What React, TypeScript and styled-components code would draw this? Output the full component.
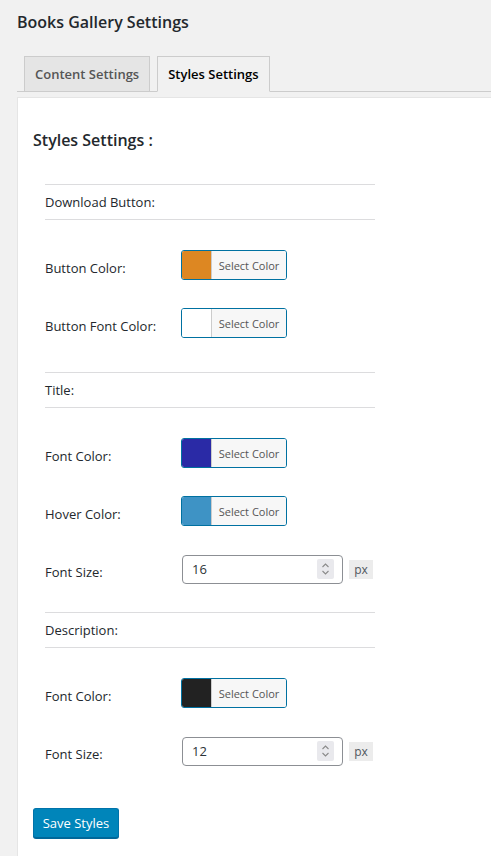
import React from "react";
import styled, { createGlobalStyle } from "styled-components";

const Global = createGlobalStyle`
  html, body { margin: 0; padding: 0; background: #f1f1f1; }
  body { font-family: "Open Sans", "Noto Sans", sans-serif; color: #23282d; }
  * { box-sizing: border-box; }
`;

const Wrap = styled.div`
  padding: 0 0 0 17px;
  min-height: 856px;
  display: flex;
  flex-direction: column;
`;

const PageTitle = styled.h1`
  margin: 0;
  padding: 10px 0 0;
  font-size: 16px;
  font-weight: 600;
  line-height: 24px;
  color: #23282d;
`;

const TabBar = styled.div`
  display: flex;
  align-items: flex-end;
  gap: 7px;
  margin-top: 22px;
  padding-left: 7px;
  border-bottom: 1px solid #ccc;
  height: 36px;
`;

const Tab = styled.div<{ $active?: boolean }>`
  padding: 5px 10px;
  line-height: 24px;
  font-size: 13px;
  font-weight: 600;
  border: 1px solid #ccc;
  border-bottom: 1px solid ${(p) => (p.$active ? "#f1f1f1" : "#ccc")};
  margin-bottom: -1px;
  background: ${(p) => (p.$active ? "#f1f1f1" : "#e5e5e5")};
  color: ${(p) => (p.$active ? "#000" : "#555")};
  height: 36px;
`;

const Panel = styled.div`
  flex: 1;
  margin-top: 5px;
  background: #fff;
  border-top: 1px solid #e5e5e5;
  border-left: 1px solid #e5e5e5;
  padding: 30px 0 40px 15px;
  display: flex;
  flex-direction: column;
  align-items: flex-start;
`;

const Heading = styled.h2`
  margin: 0;
  font-size: 16px;
  font-weight: 600;
  line-height: 24px;
  color: #23282d;
`;

const Table = styled.div`
  margin: 32px 0 0 12px;
  width: 330px;
  display: flex;
  flex-direction: column;
`;

const Section = styled.div<{ $offset?: number }>`
  margin-top: ${(p) => p.$offset ?? 0}px;
  margin-bottom: 30px;
  height: 36px;
  border-top: 1px solid #dcdcde;
  border-bottom: 1px solid #dcdcde;
  display: flex;
  align-items: center;
  font-size: 13px;
  color: #23282d;
`;

const Row = styled.div`
  display: grid;
  grid-template-columns: 136px auto;
  height: 30px;
  margin-bottom: 28px;
`;

const Label = styled.div`
  padding-top: 8px;
  line-height: 20px;
  font-size: 13px;
  color: #23282d;
`;

const Picker = styled.div`
  display: flex;
  width: 106px;
  height: 30px;
  border: 1px solid #0071a1;
  border-radius: 3px;
  overflow: hidden;
`;

const Swatch = styled.div<{ $color: string }>`
  width: 30px;
  background: ${(p) => p.$color};
  border-right: 1px solid #ccc;
`;

const PickerText = styled.div`
  flex: 1;
  background: #f7f7f7;
  color: #555;
  font-size: 11px;
  display: flex;
  align-items: center;
  justify-content: center;
`;

const NumberRowBox = styled.div`
  display: flex;
  align-items: center;
  gap: 6px;
`;

const NumberBox = styled.div`
  margin-left: 1px;
  width: 161px;
  height: 29px;
  border: 1px solid #8c8f94;
  border-radius: 4px;
  display: flex;
  align-items: center;
  padding: 0 8px 0 9px;
  background: #fff;
`;

const NumberInput = styled.input`
  flex: 1;
  min-width: 0;
  border: none;
  outline: none;
  padding: 0;
  font-family: inherit;
  font-size: 13px;
  color: #2c3338;
  background: transparent;
`;

const Spinner = styled.div`
  width: 17px;
  height: 20px;
  background: #e9e9ed;
  border-radius: 2px;
  display: flex;
  align-items: center;
  justify-content: center;
`;

const Unit = styled.span`
  display: inline-flex;
  align-items: center;
  justify-content: center;
  width: 24px;
  height: 19px;
  background: #ececec;
  color: #50575e;
  font-size: 12px;
`;

const SaveButton = styled.button`
  margin-top: 14px;
  width: 86px;
  height: 30px;
  background: #0085ba;
  border: 1px solid #0073aa;
  border-bottom-color: #006799;
  border-radius: 3px;
  box-shadow: 0 1px 0 #006799;
  color: #fff;
  font-family: inherit;
  font-size: 13px;
  padding: 0;
  cursor: pointer;
`;

const SpinIcon = () => (
  <svg width="9" height="14" viewBox="0 0 9 14" fill="none" stroke="#8a8a8a" strokeWidth="1.1">
    <path d="M1.5 5 L4.5 2 L7.5 5" />
    <path d="M1.5 9 L4.5 12 L7.5 9" />
  </svg>
);

const ColorRow = ({ label, color }: { label: string; color: string }) => (
  <Row>
    <Label>{label}</Label>
    <Picker>
      <Swatch $color={color} />
      <PickerText>Select Color</PickerText>
    </Picker>
  </Row>
);

const SizeRow = ({ label, value }: { label: string; value: string }) => (
  <Row>
    <Label>{label}</Label>
    <NumberRowBox>
      <NumberBox>
        <NumberInput type="text" defaultValue={value} />
        <Spinner>
          <SpinIcon />
        </Spinner>
      </NumberBox>
      <Unit>px</Unit>
    </NumberRowBox>
  </Row>
);

export default function App() {
  return (
    <>
      <Global />
      <Wrap>
        <PageTitle>Books Gallery Settings</PageTitle>
        <TabBar>
          <Tab>Content Settings</Tab>
          <Tab $active>Styles Settings</Tab>
        </TabBar>
        <Panel>
          <Heading>Styles Settings :</Heading>
          <Table>
            <Section>Download Button:</Section>
            <ColorRow label="Button Color:" color="#dd8722" />
            <ColorRow label="Button Font Color:" color="#ffffff" />
            <Section $offset={6}>Title:</Section>
            <ColorRow label="Font Color:" color="#2a2aa6" />
            <ColorRow label="Hover Color:" color="#3e93c5" />
            <SizeRow label="Font Size:" value="16" />
            <Section>Description:</Section>
            <ColorRow label="Font Color:" color="#222222" />
            <SizeRow label="Font Size:" value="12" />
          </Table>
          <SaveButton>Save Styles</SaveButton>
        </Panel>
      </Wrap>
    </>
  );
}
